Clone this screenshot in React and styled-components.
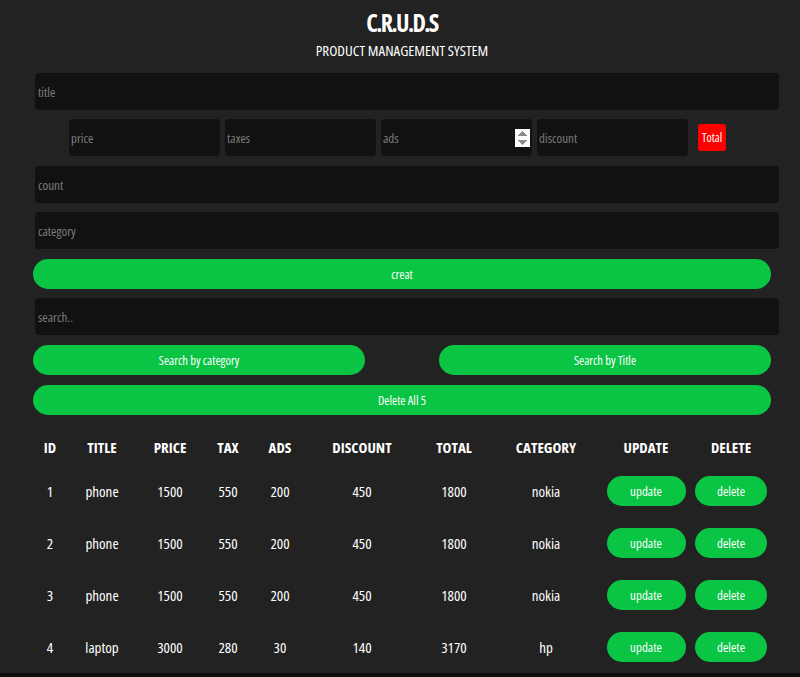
import styled, { createGlobalStyle } from "styled-components";

const GlobalStyle = createGlobalStyle`
  html, body {
    margin: 0;
    padding: 0;
    background-color: #222222;
  }

  body {
    font-family: "Open Sans", "Liberation Sans", sans-serif;
    font-stretch: 75%;
    color: #fff;
  }

  input[type="number"]::-webkit-inner-spin-button {
    opacity: 1;
  }
`;

const products = [
  { id: 1, title: "phone", price: 1500, taxes: 550, ads: 200, discount: 450, total: 1800, category: "nokia" },
  { id: 2, title: "phone", price: 1500, taxes: 550, ads: 200, discount: 450, total: 1800, category: "nokia" },
  { id: 3, title: "phone", price: 1500, taxes: 550, ads: 200, discount: 450, total: 1800, category: "nokia" },
  { id: 4, title: "laptop", price: 3000, taxes: 280, ads: 30, discount: 140, total: 3170, category: "hp" },
  { id: 5, title: "laptop", price: 3000, taxes: 280, ads: 30, discount: 140, total: 3170, category: "hp" },
];

const columns = [
  { name: "ID", width: 40 },
  { name: "TITLE", width: 64 },
  { name: "PRICE", width: 72 },
  { name: "TAX", width: 44 },
  { name: "ADS", width: 60 },
  { name: "DISCOUNT", width: 104 },
  { name: "TOTAL", width: 80 },
  { name: "CATEGORY", width: 104 },
  { name: "UPDATE", width: 96 },
  { name: "DELETE", width: 74 },
];

const App = () => {
  return (
    <>
      <GlobalStyle />
      <Crud>
        <Head>
          <h2>C.R.U.D.S</h2>
          <p>PRODUCT MANAGEMENT SYSTEM</p>
        </Head>

        <Inputs>
          <Field type="text" placeholder="title" />
          <Price>
            <SmallField type="text" placeholder="price" />
            <SmallField type="text" placeholder="taxes" />
            <SmallField type="number" placeholder="ads" />
            <SmallField type="text" placeholder="discount" />
            <Total>Total</Total>
          </Price>
          <Field type="text" placeholder="count" />
          <Field type="text" placeholder="category" />
          <Button>creat</Button>
        </Inputs>

        <Search>
          <Field type="text" placeholder="search.." />
          <BtnSearch>
            <Button $half>Search by category</Button>
            <Button $half>Search by Title</Button>
          </BtnSearch>
          <Button>Delete All 5</Button>
        </Search>

        <Table>
          <colgroup>
            {columns.map((col) => (
              <col key={col.name} style={{ width: col.width }} />
            ))}
          </colgroup>
          <thead>
            <tr>
              {columns.map((col) => (
                <th key={col.name}>{col.name}</th>
              ))}
            </tr>
          </thead>
          <tbody>
            {products.map((item) => (
              <tr key={item.id}>
                <td>{item.id}</td>
                <td>{item.title}</td>
                <td>{item.price}</td>
                <td>{item.taxes}</td>
                <td>{item.ads}</td>
                <td>{item.discount}</td>
                <td>{item.total}</td>
                <td>{item.category}</td>
                <td>
                  <RowButton $w={79}>update</RowButton>
                </td>
                <td>
                  <RowButton $w={72}>delete</RowButton>
                </td>
              </tr>
            ))}
          </tbody>
        </Table>
      </Crud>
      <BottomBar />
    </>
  );
};

export default App;

const Crud = styled.div`
  width: 746px;
  margin-left: 33px;
`;

const Head = styled.div`
  text-align: center;
  padding-top: 9px;
  margin-left: -8px;

  h2 {
    margin: 0;
    font-size: 24px;
    line-height: 28px;
    font-weight: 700;
    letter-spacing: -1.6px;
  }

  p {
    margin: 4px 0 0;
    font-size: 15px;
    line-height: 18px;
  }
`;

const Inputs = styled.div`
  display: flex;
  flex-direction: column;
  margin-top: 14px;
`;

const Field = styled.input`
  box-sizing: border-box;
  width: calc(100% - 2px);
  height: 37px;
  margin: 0 0 9px 2px;
  padding: 0 3px;
  border: none;
  outline: none;
  border-radius: 4px;
  background-color: #111;
  color: #fff;
  font-family: inherit;
  font-stretch: 75%;
  font-size: 13px;

  &::placeholder {
    color: #7c7c7c;
  }
`;

const Price = styled.div`
  display: flex;
  align-items: center;
  gap: 5px;
  padding-left: 36px;
  margin-bottom: 10px;
`;

const SmallField = styled(Field)`
  width: 151px;
  margin: 0;
  padding: 0 2px;
`;

const Total = styled.small`
  display: flex;
  align-items: center;
  justify-content: center;
  width: 28px;
  height: 27px;
  margin-left: 5px;
  border-radius: 3px;
  background-color: #ff0000;
  font-size: 12px;
`;

const Button = styled.button`
  width: ${({ $half }) => ($half ? "332px" : "738px")};
  height: 30px;
  margin-top: 1px;
  border: none;
  border-radius: 15px;
  background-color: #0ac444;
  color: #fff;
  font-family: inherit;
  font-stretch: 75%;
  font-size: 12.5px;
  cursor: pointer;
`;

const Search = styled.div`
  display: flex;
  flex-direction: column;
  margin-top: 9px;
`;

const BtnSearch = styled.div`
  display: flex;
  justify-content: space-between;
  width: 738px;
  margin: 0 0 9px;
`;

const Table = styled.table`
  table-layout: fixed;
  width: 738px;
  margin-top: 14px;
  margin-left: -3px;
  border-collapse: collapse;
  text-align: center;

  th {
    height: 36px;
    padding: 0;
    font-size: 15px;
    font-weight: 700;
  }

  td {
    height: 52px;
    padding: 0;
    font-size: 15px;
  }
`;

const RowButton = styled.button`
  width: ${({ $w }) => $w}px;
  height: 30px;
  border: none;
  border-radius: 15px;
  background-color: #0ac444;
  color: #fff;
  font-family: inherit;
  font-stretch: 75%;
  font-size: 13px;
  cursor: pointer;
`;

const BottomBar = styled.div`
  position: fixed;
  left: 0;
  right: 0;
  bottom: 0;
  height: 4px;
  background-color: #0c0c0c;
`;
